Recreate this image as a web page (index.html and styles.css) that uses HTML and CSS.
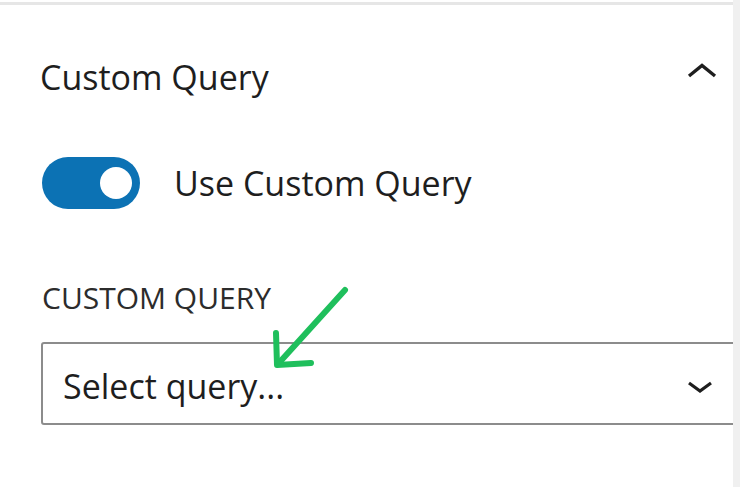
FILE: index.html
```html
<!DOCTYPE html>
<html lang="en">
  <head>
    <meta charset="UTF-8" />
    <meta name="viewport" content="width=device-width, initial-scale=1.0" />
    <title>Custom Query</title>
    <link rel="stylesheet" href="styles.css">
  </head>
  <body>
    <div class="sidebar">
      <div class="panel">
        <div class="panel-header">
          <h2 class="panel-title">Custom Query</h2>
          <button class="panel-toggle" aria-expanded="true">
            <svg width="30" height="15" viewBox="0 0 30 15">
              <polyline points="2,13 15,2.5 28,13" fill="none" stroke="#1e1e1e" stroke-width="3.4" />
            </svg>
          </button>
        </div>
        <div class="panel-body">
          <label class="toggle-row">
            <span class="toggle is-checked"><span class="toggle-thumb"></span></span>
            <span class="toggle-label">Use Custom Query</span>
          </label>
          <div class="field">
            <label class="field-label">Custom Query</label>
            <div class="select-wrap">
              <div class="select">Select query...</div>
              <svg class="select-arrow" width="26" height="12" viewBox="0 0 26 12">
                <polyline points="2,2 13,10 24,2" fill="none" stroke="#1e1e1e" stroke-width="3.2" />
              </svg>
            </div>
          </div>
        </div>
        <!-- pointer drawn over the field -->
        <svg class="pointer" width="90" height="95" viewBox="0 0 90 95">
          <g fill="none" stroke="#1fbf5c" stroke-width="6" stroke-linecap="round" stroke-linejoin="round">
            <line x1="77" y1="9" x2="10" y2="83" />
            <polyline points="8,52 9,84 43,82" />
          </g>
        </svg>
      </div>
      <div class="scroll-track"></div>
    </div>
  </body>
</html>
```

FILE: styles.css
```css
body {
  margin: 0;
  padding: 0;
  background: #fff;
  font-family: "Open Sans", "Noto Sans", sans-serif;
  color: #1e1e1e;
}
.sidebar {
  display: flex;
  height: 100vh;
}
.panel {
  position: relative;
  flex: 1;
  margin-top: 2px;
  border-top: 3px solid #e6e6e6;
  overflow: hidden;
}
.scroll-track {
  width: 7px;
  background: #f0f0f0;
}
.panel-header {
  display: flex;
  justify-content: space-between;
  align-items: flex-start;
  padding: 52px 16px 0 40px;
}
.panel-title {
  margin: 0;
  font-size: 34px;
  font-weight: 400;
  line-height: 40px;
}
.panel-toggle {
  margin-top: 6px;
  padding: 0;
  border: none;
  background: none;
  line-height: 0;
}
.panel-body {
  padding: 60px 0 0 42px;
}
.toggle-row {
  display: flex;
  align-items: center;
  gap: 34px;
}
.toggle {
  display: flex;
  justify-content: flex-end;
  align-items: center;
  box-sizing: border-box;
  width: 98px;
  height: 52px;
  padding: 0 8px;
  border-radius: 26px;
  background: #0c72b4;
}
.toggle-thumb {
  width: 32px;
  height: 32px;
  border-radius: 50%;
  background: #fff;
}
.toggle-label {
  font-size: 34px;
  line-height: 40px;
}
.field {
  margin-top: 71px;
}
.field-label {
  display: block;
  font-size: 30px;
  line-height: 36px;
  text-transform: uppercase;
  color: #2c2c2c;
}
.select-wrap {
  position: relative;
  margin-top: 26px;
  margin-left: -1px;
  margin-right: -4px;
}
.select {
  box-sizing: border-box;
  height: 83px;
  padding: 22px 0 0 20px;
  border: 2px solid #8c8c8c;
  border-radius: 3px;
  font-size: 34px;
  line-height: 40px;
}
.select-arrow {
  position: absolute;
  right: 24px;
  top: 39px;
}
.pointer {
  position: absolute;
  left: 268px;
  top: 276px;
}
```
